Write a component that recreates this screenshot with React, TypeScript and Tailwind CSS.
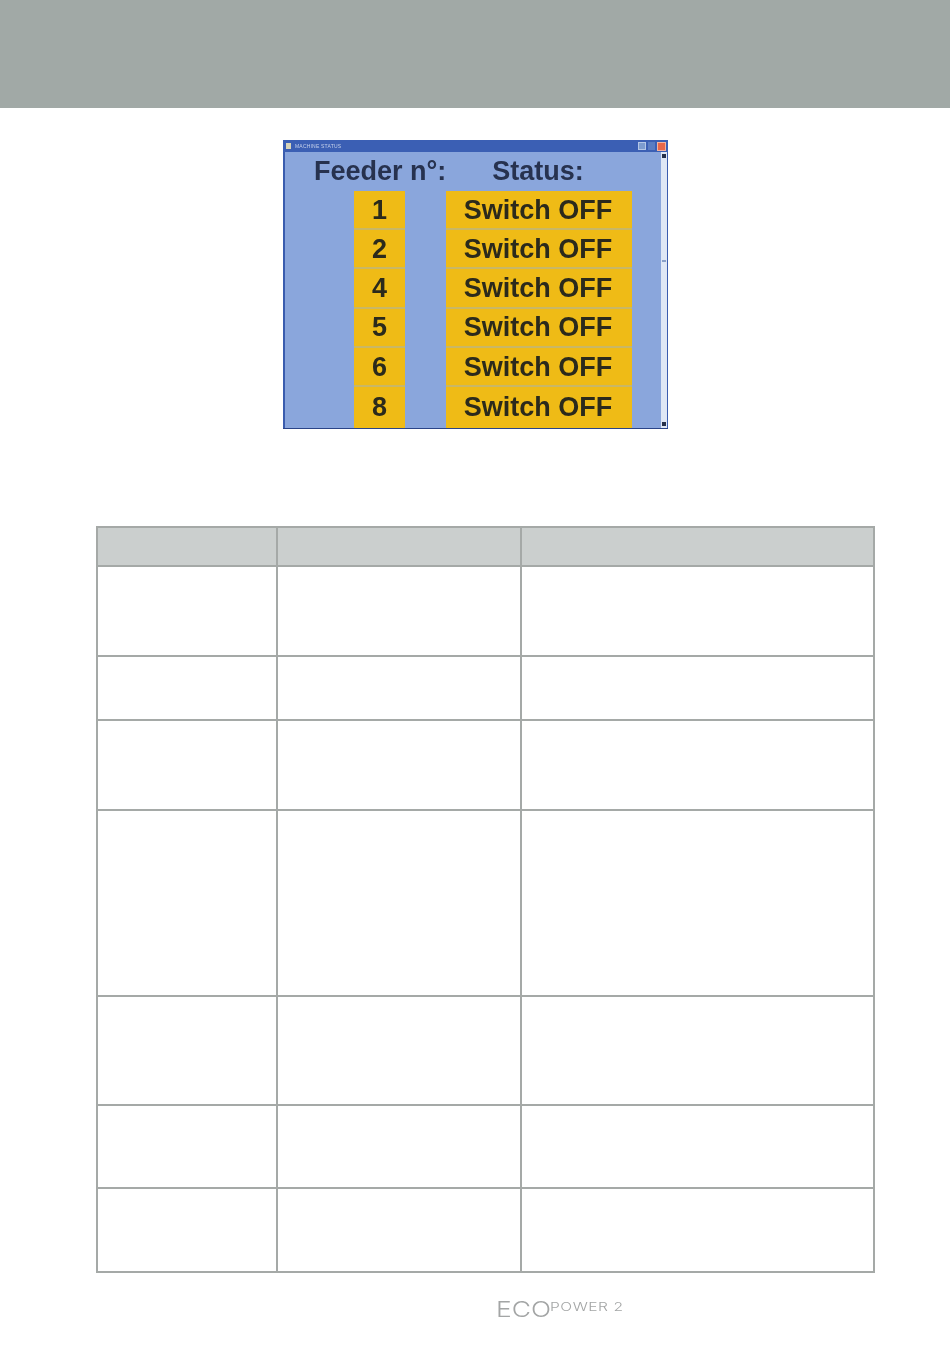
const feeders = ["1", "2", "4", "5", "6", "8"];

// row heights from the manual's table, line to line
const rows = [90, 64, 90, 186, 109, 83, 84];

const FeederRow = ({ n, last }: { n: string; last: boolean }) => {
  const cell = last
    ? "h-[41px] flex items-center justify-center bg-[#efbb16] border-b-2 border-[#efbb16] pt-[1px] text-[27px] font-bold text-[#2b2a1c] blur-[0.4px]"
    : "h-[39.2px] flex items-center justify-center bg-[#efbb16] border-b-2 border-[#c9b765] pt-[1px] text-[27px] font-bold text-[#2b2a1c] blur-[0.4px]";
  return (
    <div className="flex pl-[69px]">
      <div className={`w-[51px] ${cell}`}>{n}</div>
      <div className={`w-[186px] ml-[41px] pr-[2px] ${cell}`}>Switch OFF</div>
    </div>
  );
};

const StatusWindow = () => (
  <div className="ml-[283px] mt-[32px] w-[385px] h-[289px] flex flex-col bg-[#3a5cae] border-b border-[#2a4488]">
    <div className="h-[12px] flex items-center pl-[3px] pr-[2px] bg-[#3b5fb4]">
      <div className="w-[5px] h-[6px] bg-[#d8d4b8]" />
      <span className="ml-[4px] text-[5px] leading-none text-[#c4d0ea] tracking-[0.2px] blur-[0.3px]">MACHINE STATUS</span>
      <div className="ml-auto w-[8px] h-[8px] bg-[#7d9ccf] border border-[#b4c6e6]" />
      <div className="ml-[2px] w-[7px] h-[8px] bg-[#5a7cc2]" />
      <div className="ml-[2px] w-[9px] h-[9px] bg-[#e8674a] border border-[#f2b29e]" />
    </div>
    <div className="flex-1 flex ml-[2px] mr-[1px]">
      <div className="flex-1 bg-[#8aa6dc]">
        <div className="h-[39px] pl-[29px] flex items-center text-[27px] font-bold text-[#27324f] blur-[0.4px]">
          <span>Feeder n°:</span>
          <span className="ml-[46px]">Status:</span>
        </div>
        {feeders.map((n, i) => (
          <FeederRow key={n} n={n} last={i === feeders.length - 1} />
        ))}
      </div>
      <div className="w-[6px] flex flex-col items-center bg-[#dfe7f5] py-[2px]">
        <div className="w-[4px] h-[4px] bg-[#26304a]" />
        <div className="w-[4px] h-[2px] mt-[102px] bg-[#8aa0c8]" />
        <div className="w-[4px] h-[4px] mt-auto bg-[#26304a]" />
      </div>
    </div>
  </div>
);

const Row = ({ height, head }: { height: number; head?: boolean }) => (
  <div
    className={`grid grid-cols-[182px_244px_1fr] border-t-2 border-[#a5a9a7] ${head ? "bg-[#cbcfce]" : "bg-white"}`}
    style={{ height }}
  >
    <div className="border-l-2 border-r-2 border-[#a5a9a7]" />
    <div className="border-r-2 border-[#a5a9a7]" />
    <div className="border-r-2 border-[#a5a9a7]" />
  </div>
);

export default function App() {
  return (
    <div className="w-[950px] h-[1348px] overflow-hidden bg-white font-['Liberation_Sans',Arial,sans-serif]">
      <div className="h-[108px] bg-[#a1a9a6]" />
      <StatusWindow />

      <div className="ml-[96px] mt-[97px] w-[779px] border-b-2 border-[#a5a9a7]">
        <Row height={39} head />
        {rows.map((h, i) => (
          <Row key={i} height={h} />
        ))}
      </div>

      {/* footer logo */}
      <div className="mt-[25px] ml-[496px] flex items-start text-[#a3a5a5] font-['Inter',sans-serif] font-light leading-none">
        <span className="text-[22px] scale-x-[1.2] origin-left w-[54px]">ECO</span>
        <span className="mt-[3px] text-[12px] tracking-[0.4px] scale-x-[1.3] origin-left">POWER 2</span>
      </div>
    </div>
  );
}
